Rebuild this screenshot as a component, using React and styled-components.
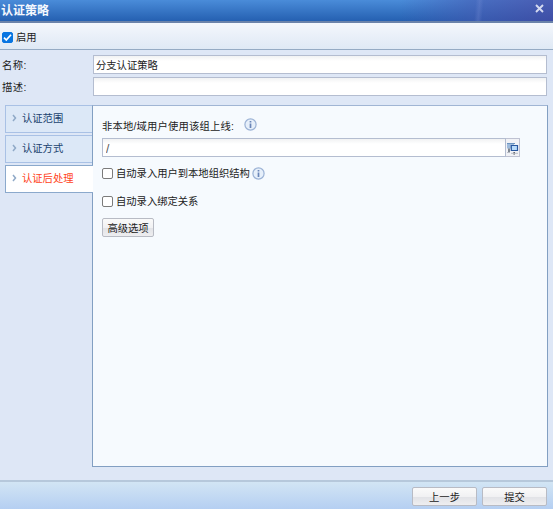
import { useState } from 'react';
import styled, { createGlobalStyle } from 'styled-components';

const GlobalStyle = createGlobalStyle`
    * {
        box-sizing: border-box;
    }

    body {
        margin: 0;
        background: #fff;
        overflow: hidden;
    }

    button, input {
        font: inherit;
        color: inherit;
    }
`;

const Dialog = styled.div`
    display: flex;
    flex-direction: column;
    width: 553px;
    height: 509px;
    background: #dee7f6;
    color: #222;
    font: 10.3px/16px "Liberation Sans", "Noto Sans CJK SC", sans-serif;
    white-space: nowrap;
`;

const TitleBar = styled.header`
    display: flex;
    justify-content: space-between;
    height: 23px;
    padding: 2px 8px 0 1px;
    border-bottom: 2px solid #6b83aa;
    background:
        linear-gradient(95deg, transparent 474px, #8a9cde38 478px, transparent 482px),
        linear-gradient(90deg, transparent 400px, #4656ae88 470px, #4a45a0aa 553px),
        linear-gradient(#4a8cd9, #2560b1);
`;

const Title = styled.h1`
    margin: 0;
    color: #f4f8fe;
    font-size: 12px;
    font-weight: 700;
    line-height: 18px;
`;

const CloseButton = styled.button`
    display: flex;
    width: 11px;
    height: 12px;
    padding: 2px 1px;
    border: 0;
    background: none;
`;

const Toolbar = styled.div`
    display: flex;
    align-items: center;
    height: 27px;
    padding: 2px 3px 0 2px;
    border-bottom: 1px solid #95abc4;
    background: linear-gradient(#f4f7fc, #dfe9f5);
`;

const CheckLabel = styled.label`
    display: flex;
    align-items: center;
    gap: 3px;
    height: 16px;
`;

const CheckText = styled.span`
    padding-top: 2px;
`;

const CheckInput = styled.input`
    appearance: none;
    flex: none;
    width: 11px;
    height: 11px;
    margin: 0;
    border: 1px solid #7b7b7b;
    border-radius: 2px;
    background: #fff;

    &:checked {
        border-color: #0875e1;
        background: #0875e1;
    }
`;

const CheckBox = styled.span`
    display: grid;

    > * {
        grid-area: 1 / 1;
    }

    svg {
        pointer-events: none;
    }
`;

const Form = styled.div`
    display: grid;
    gap: 3px;
    padding: 5px 6px 0 2px;
`;

const Field = styled.label`
    display: grid;
    grid-template-columns: 91px 1fr;
    height: 19px;
    line-height: 22px;
`;

const FieldName = styled.span`
    letter-spacing: 0.4px;
`;

const TextInput = styled.input`
    min-width: 0;
    width: 100%;
    height: 19px;
    padding: 2px 2px 0;
    border: 1px solid #b4bdd0;
    border-radius: 0;
    outline: none;
    background: linear-gradient(#f1f2f3, #fff 5px);
`;

const Body = styled.div`
    display: flex;
    flex: 1;
    padding: 9px 5px 13px;
`;

const Tabs = styled.nav`
    display: flex;
    flex-direction: column;
    gap: 2px;
    width: 87px;
`;

const Tab = styled.button`
    display: flex;
    align-items: center;
    gap: 5px;
    width: ${({ $active }) => ($active ? 88 : 87)}px;
    height: 28px;
    padding: 0 0 1px 6px;
    border: 1px solid ${({ $active }) => ($active ? '#8ba9cc' : '#a9c1e5')};
    border-right: 0;
    background: ${({ $active }) => ($active ? '#fff' : '#dce8f7')};
    color: ${({ $active }) => ($active ? '#ff4322' : '#20436f')};
    position: relative;
    z-index: 1;

    svg {
        margin-bottom: 2px;
    }
`;

const Panel = styled.main`
    display: flex;
    flex-direction: column;
    align-items: flex-start;
    flex: 1;
    padding: 12px 9px 0;
    border: 1px solid #829fc2;
    border-top-color: #a0b5d4;
    background: #f6fafe;
`;

const Heading = styled.div`
    display: flex;
    align-items: center;
    gap: 10px;
    height: 16px;

    svg {
        margin-top: -3px;
    }
`;

const HeadingText = styled.span`
    padding-top: 1px;
    letter-spacing: 0.2px;
`;

const GroupPicker = styled.div`
    display: flex;
    width: 418px;
    margin: 4px 0 8px;
`;

const PickerInput = styled(TextInput)`
    flex: 1;
    padding-left: 3px;
    color: #555;
    font-size: 12px;
`;

const PickerButton = styled.button`
    width: 14px;
    height: 19px;
    padding: 0;
    border: 1px solid #bfc2d2;
    border-left: 0;
    background: #f1f2f6;
    line-height: 0;

    svg {
        display: block;
        margin: 3px 0 0;
    }
`;

const OptionRow = styled.div`
    display: flex;
    align-items: center;
    gap: 2px;
    height: 16px;
    margin-bottom: ${({ $space }) => $space}px;
`;

const Button = styled.button`
    width: ${({ $width }) => $width}px;
    height: 19px;
    padding: 1px 0 0;
    border: 1px solid #b8bbc4;
    border-radius: 2px;
    background: linear-gradient(#fafafa, #f1f1f3 50%, #e2e3e7 55%, #eeeef0);
    line-height: 17px;
`;

const Footer = styled.footer`
    display: flex;
    justify-content: flex-end;
    gap: 5px;
    height: 29px;
    padding: 5px 6px 0;
    border-top: 2px solid #b6c8db;
    background: linear-gradient(#d2e5f4, #b5cff2);
`;

const InfoIcon = () => (
    <svg width="13" height="13" viewBox="0 0 13 13">
        <circle cx="6.5" cy="6.5" r="5.6" fill="#e6effa" stroke="#9bb2d5" strokeWidth="1.2" />
        <path d="M6.5 3v1.5M6.5 5.4v4.6" stroke="#6a86b7" strokeWidth="1.7" />
    </svg>
);

const ArrowIcon = () => (
    <svg width="5" height="8" viewBox="0 0 5 8" fill="none" stroke="#8fa9c7" strokeWidth="1.5">
        <path d="M1 1l2.5 3L1 7" />
    </svg>
);

const ComputersIcon = () => (
    <svg width="13" height="14" viewBox="0 0 13 14">
        <path d="M1 1.5h7v5H1z" fill="#9dbadb" />
        <path d="M1 1.5h8" stroke="#6c94c0" />
        <path d="M3 6.5v3.5" stroke="#34404f" strokeWidth="1.2" />
        <path d="M1 10.5h3" stroke="#b9bcc5" />
        <path d="M5.3 3.5h6.2v5H5.3z" fill="#b7dafa" stroke="#2857a0" strokeWidth="1.2" />
        <path d="M8.2 10v2.5" stroke="#50545d" strokeWidth="1.6" />
        <path d="M5 11.3h7" stroke="#b9bcc5" />
    </svg>
);

const Check = ({ children, defaultChecked = false }) => {
    const [checked, setChecked] = useState(defaultChecked);

    return (
        <CheckLabel>
            <CheckBox>
                <CheckInput type="checkbox" checked={checked} onChange={() => setChecked(!checked)} />
                {checked && (
                    <svg width="11" height="11" viewBox="0 0 11 11" fill="none">
                        <path d="M2 5.7l2.3 2.4L9 2.7" stroke="#fff" strokeWidth="1.7" />
                    </svg>
                )}
            </CheckBox>
            <CheckText>{children}</CheckText>
        </CheckLabel>
    );
};

const tabs = ['认证范围', '认证方式', '认证后处理'];

const App = () => {
    const [active, setActive] = useState(2);

    return (
        <>
            <GlobalStyle />
            <Dialog>
                <TitleBar>
                    <Title>认证策略</Title>
                    <CloseButton aria-label="关闭">
                        <svg width="9" height="9" viewBox="0 0 9 9">
                            <path d="M1 1l7 7M8 1L1 8" stroke="#d5daf0" strokeWidth="1.9" />
                        </svg>
                    </CloseButton>
                </TitleBar>

                <Toolbar>
                    <Check defaultChecked>启用</Check>
                </Toolbar>

                <Form>
                    <Field>
                        <FieldName>名称:</FieldName>
                        <TextInput defaultValue="分支认证策略" />
                    </Field>
                    <Field>
                        <FieldName>描述:</FieldName>
                        <TextInput />
                    </Field>
                </Form>

                <Body>
                    <Tabs>
                        {tabs.map((tab, index) => (
                            <Tab key={tab} $active={active === index} onClick={() => setActive(index)}>
                                <ArrowIcon />
                                {tab}
                            </Tab>
                        ))}
                    </Tabs>

                    <Panel>
                        <Heading>
                            <HeadingText>非本地/域用户使用该组上线:</HeadingText>
                            <InfoIcon />
                        </Heading>
                        <GroupPicker>
                            <PickerInput defaultValue="/" />
                            <PickerButton aria-label="选择组"><ComputersIcon /></PickerButton>
                        </GroupPicker>
                        <OptionRow $space={12}>
                            <Check>自动录入用户到本地组织结构</Check>
                            <InfoIcon />
                        </OptionRow>
                        <OptionRow $space={9}>
                            <Check>自动录入绑定关系</Check>
                        </OptionRow>
                        <Button $width={52}>高级选项</Button>
                    </Panel>
                </Body>

                <Footer>
                    <Button $width={65}>上一步</Button>
                    <Button $width={65}>提交</Button>
                </Footer>
            </Dialog>
        </>
    );
};

export default App;
